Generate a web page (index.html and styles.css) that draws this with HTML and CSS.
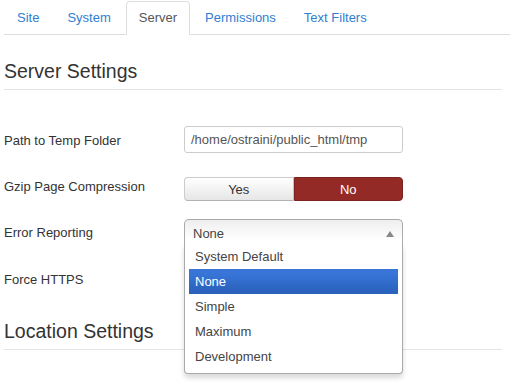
FILE: index.html
```html
<!DOCTYPE html>
<html>
<head>
<meta charset="utf-8">
<link rel="stylesheet" href="styles.css">
</head>
<body>
<ul class="tabs">
  <li class="tab"><a>Site</a></li>
  <li class="tab"><a>System</a></li>
  <li class="tab active"><a>Server</a></li>
  <li class="tab"><a>Permissions</a></li>
  <li class="tab"><a>Text Filters</a></li>
</ul>
<div class="content">
  <h2 class="legend">Server Settings</h2>
  <div class="row row-path">
    <label class="label">Path to Temp Folder</label>
    <div class="input">/home/ostraini/public_html/tmp</div>
  </div>
  <div class="row row-gzip">
    <label class="label">Gzip Page Compression</label>
    <div class="toggle">
      <span class="btn btn-yes">Yes</span>
      <span class="btn btn-no">No</span>
    </div>
  </div>
  <div class="row row-error">
    <label class="label">Error Reporting</label>
    <div class="chosen">
      <div class="chosen-single">
        <span>None</span>
        <svg class="arrow" width="8" height="6" viewBox="0 0 8 6"><path d="M0 6 L4 0 L8 6 Z" fill="#888"/></svg>
      </div>
      <div class="chosen-drop">
        <ul class="results">
          <li class="opt">System Default</li>
          <li class="opt hl">None</li>
          <li class="opt">Simple</li>
          <li class="opt">Maximum</li>
          <li class="opt">Development</li>
        </ul>
      </div>
    </div>
  </div>
  <div class="row row-https">
    <label class="label">Force HTTPS</label>
  </div>
  <h2 class="legend legend-location">Location Settings</h2>
</div>
</body>
</html>
```
FILE: styles.css
```css
html, body {
  margin: 0;
  padding: 0;
  background: #fff;
}
body {
  font-family: "Liberation Sans", Arial, sans-serif;
  font-size: 13px;
  color: #333;
  min-height: 382px;
}
.tabs {
  list-style: none;
  margin: 0 0 0 4px;
  padding: 1px 0 0 0;
  display: flex;
  border-bottom: 1px solid #ddd;
}
.tab {
  margin-bottom: -1px;
  margin-right: 2px;
}
.tab a {
  display: block;
  padding: 6px 12px;
  line-height: 20px;
  border: 1px solid transparent;
  border-radius: 4px 4px 0 0;
  color: #2f80d1;
}
.tab.active a {
  color: #555;
  border-color: #ddd;
  border-bottom-color: #fff;
  background: #fff;
}
.content {
  padding: 0 8px 40px 4px;
}
.legend {
  margin: 24px 0 0 0;
  padding-bottom: 6px;
  font-size: 19.5px;
  line-height: 24px;
  font-weight: normal;
  color: #333;
  border-bottom: 1px solid #e5e5e5;
}
.legend-location {
  margin-top: 28px;
  padding-bottom: 6px;
}
.row {
  display: flex;
  align-items: center;
}
.label {
  width: 180px;
  flex: none;
}
.row-path {
  margin-top: 36px;
  height: 27px;
  margin-bottom: 24px;
}
.row-path .label {
  padding-top: 1px;
}
.row-gzip {
  height: 24px;
  margin-bottom: 18px;
  align-items: flex-start;
}
.row-gzip .label {
  line-height: 19px;
}
.row-error {
  height: 26px;
  margin-bottom: 20px;
  align-items: flex-start;
}
.row-error .label {
  line-height: 26px;
  padding-top: 1px;
}
.row-https {
  height: 26px;
}
.row-https .label {
  padding-top: 2px;
}
.input {
  box-sizing: border-box;
  width: 219px;
  height: 27px;
  line-height: 25px;
  padding: 0 6px;
  border: 1px solid #ccc;
  border-radius: 3px;
  color: #555;
}
.toggle {
  display: flex;
  width: 219px;
  height: 24px;
}
.btn {
  box-sizing: border-box;
  flex: 1;
  text-align: center;
  line-height: 23px;
  border: 1px solid #bbb;
}
.btn-yes {
  color: #333;
  background: linear-gradient(#fff, #e6e6e6);
  border-color: #ccc #c4c4c4 #b3b3b3 #ccc;
  border-radius: 4px 0 0 4px;
}
.btn-no {
  color: #fff;
  background: #942a25;
  border-color: #7a221e;
  border-radius: 0 4px 4px 0;
}
.chosen {
  position: relative;
  width: 219px;
}
.chosen-single {
  box-sizing: border-box;
  height: 26px;
  display: flex;
  align-items: center;
  justify-content: space-between;
  padding: 2px 8px 0 8px;
  border: 1px solid #aaa;
  border-bottom: none;
  border-radius: 5px 5px 0 0;
  background: linear-gradient(#eee 0%, #fff 80%);
  color: #444;
}
.chosen-drop {
  position: absolute;
  z-index: 10;
  top: 25px;
  left: 0;
  box-sizing: border-box;
  width: 219px;
  background: #fff;
  border: 1px solid #aaa;
  border-top: none;
  border-radius: 0 0 4px 4px;
  box-shadow: 0 4px 5px rgba(0, 0, 0, 0.15);
}
.results {
  list-style: none;
  margin: 0 4px 4px 0;
  padding: 0 0 0 4px;
}
.opt {
  padding: 5px 6px;
  line-height: 15px;
  color: #444;
}
.opt.hl {
  color: #fff;
  background: linear-gradient(#3875d7 20%, #2a62bc 90%);
}
```
